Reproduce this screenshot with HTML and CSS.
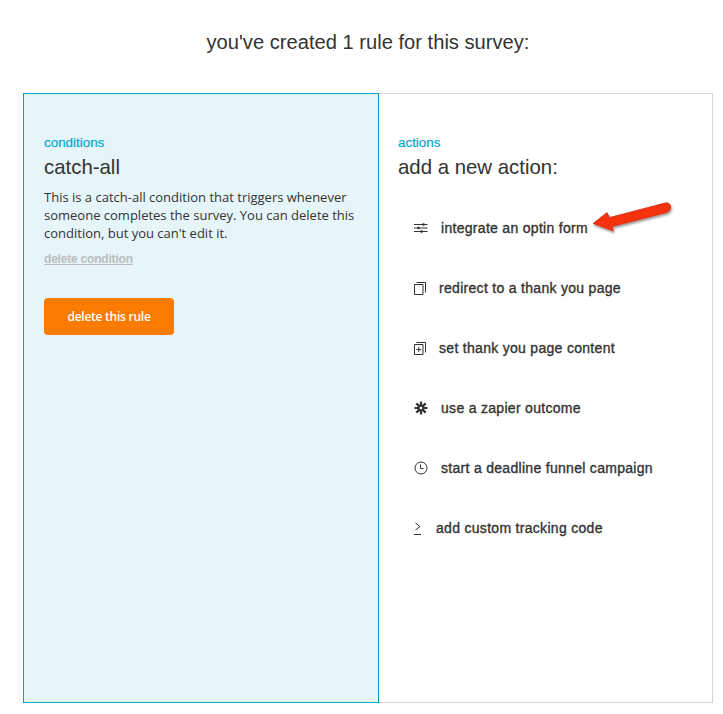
FILE: index.html
```html
<!DOCTYPE html>
<html lang="en">
<head>
    <meta charset="UTF-8">
    <meta name="viewport" content="width=device-width, initial-scale=1.0">
    <title>Survey rules</title>
    <link rel="stylesheet" href="styles.css">
</head>
<body>
    <div class="page">
        <h1 class="page-title">you've created 1 rule for this survey:</h1>
        <div class="rule">
            <div class="conditions">
                <div class="label">conditions</div>
                <h2 class="heading">catch-all</h2>
                <p class="description">This is a catch-all condition that triggers whenever someone completes the survey. You can delete this condition, but you can't edit it.</p>
                <a class="delete-link" href="#">delete condition</a>
                <a class="delete-button" href="#">delete this rule</a>
            </div>
            <div class="actions">
                <div class="label">actions</div>
                <h2 class="heading">add a new action:</h2>
                <ul class="action-list">
                    <li class="action">
                        <svg class="icon" width="14" height="14" viewBox="0 0 14 14">
                            <path d="M0 3.5H13.5M0 7H13.5M0 10.5H13.5" stroke="#333" fill="none"/>
                            <path d="M8.5 2.2h2v2.6h-2zM3.5 5.7h2v2.6h-2zM6.5 9.2h2v2.6h-2z" fill="#333"/>
                        </svg>
                        <span>integrate an optin form</span>
                        <svg class="arrow" width="84" height="36" viewBox="0 0 84 36">
                            <defs>
                                <filter id="arrow-shadow" x="-10%" y="-20%" width="125%" height="160%">
                                    <feDropShadow dx="1" dy="2" stdDeviation="1.2" flood-color="#000" flood-opacity="0.4"/>
                                </filter>
                            </defs>
                            <path d="M1 22.5 L15 11.5 L17.5 16.5 L73 2 Q78 1.2 78.6 5.5 Q78.6 10 74.5 11.5 L20 25.5 L21.5 30 Z" fill="#f4300c" stroke="#d3260a" stroke-width="0.7" stroke-linejoin="round" filter="url(#arrow-shadow)"/>
                        </svg>
                    </li>
                    <li class="action">
                        <svg class="icon" width="12" height="14" viewBox="0 0 12 14">
                            <path d="M0.5 3.5h8.5v10h-8.5z" stroke="#333" fill="none"/>
                            <path d="M2.5 1.5h9v10" stroke="#333" fill="none"/>
                        </svg>
                        <span>redirect to a thank you page</span>
                    </li>
                    <li class="action">
                        <svg class="icon" width="12" height="14" viewBox="0 0 12 14">
                            <path d="M0.5 3.5h8.5v10h-8.5z" stroke="#333" fill="none"/>
                            <path d="M2.5 1.5h9v10M4.75 6v5M2.25 8.5h5" stroke="#333" fill="none"/>
                        </svg>
                        <span>set thank you page content</span>
                    </li>
                    <li class="action">
                        <svg class="icon" width="14" height="14" viewBox="0 0 14 14">
                            <path d="M7 0.5V13.5M0.5 7H13.5M2.4 2.4L11.6 11.6M11.6 2.4L2.4 11.6" stroke="#333" stroke-width="2.2" fill="none"/>
                            <circle cx="7" cy="7" r="3.6" fill="#333"/>
                            <circle cx="7" cy="7" r="1.3" fill="#fff"/>
                        </svg>
                        <span>use a zapier outcome</span>
                    </li>
                    <li class="action">
                        <svg class="icon" width="14" height="14" viewBox="0 0 14 14">
                            <circle cx="7" cy="7" r="6" stroke="#333" fill="none"/>
                            <path d="M6.5 3.5V7.5H9.5" stroke="#333" fill="none"/>
                        </svg>
                        <span>start a deadline funnel campaign</span>
                    </li>
                    <li class="action">
                        <svg class="icon" width="9" height="13" viewBox="0 0 9 13">
                            <path d="M1.5 1L6 4.5L1.5 8M0 12.5H7" stroke="#333" fill="none"/>
                        </svg>
                        <span>add custom tracking code</span>
                    </li>
                </ul>
            </div>
        </div>
    </div>
</body>
</html>
```

FILE: styles.css
```css
body {
    margin: 0;
    background-color: #ffffff;
    color: #333333;
    font-family: 'Liberation Sans', Arial, sans-serif;
}
.page {
    padding: 0 10px 11px 23px;
}
.page-title {
    margin: 0;
    padding-top: 31px;
    height: 62px;
    box-sizing: border-box;
    line-height: 23px;
    font-size: 20.15px;
    font-weight: normal;
    text-align: center;
}
.rule {
    display: flex;
    margin-top: 31px;
    height: 610px;
}
.conditions {
    width: 356px;
    box-sizing: border-box;
    padding: 41px 20px 0 20px;
    background-color: #e6f5fa;
    border: 1px solid #00a5c8;
}
.actions {
    flex: 1;
    box-sizing: border-box;
    padding: 41px 19px 0 19px;
    border: 1px solid #d5d5d5;
    border-left: none;
}
.label {
    font-size: 13.4px;
    line-height: 15px;
    color: #00a8cc;
    -webkit-text-stroke: 0.2px #00a8cc;
}
.heading {
    margin: 5px 0 0;
    font-size: 20.4px;
    line-height: 24px;
    font-weight: normal;
}
.description {
    margin: 9px 0 0;
    font-family: 'Open Sans', sans-serif;
    font-size: 13px;
    line-height: 18px;
}
.delete-link {
    display: block;
    margin-top: 9px;
    font-size: 12px;
    letter-spacing: -0.2px;
    line-height: 16px;
    font-weight: bold;
    color: #bdbdbd;
}
.delete-button {
    display: block;
    width: 130px;
    height: 37px;
    margin-top: 31px;
    border-radius: 4px;
    background-color: #fb7a00;
    color: #ffffff;
    font-family: 'Open Sans', sans-serif;
    font-size: 12px;
    letter-spacing: -0.25px;
    font-weight: 600;
    line-height: 37px;
    text-align: center;
    text-decoration: none;
}
.action-list {
    list-style: none;
    margin: 19px 0 0;
    padding: 0 0 0 16px;
}
.action {
    position: relative;
    display: flex;
    align-items: center;
    gap: 13px;
    height: 60px;
    font-size: 14px;
    letter-spacing: 0.3px;
    color: #333333;
    -webkit-text-stroke: 0.35px #333333;
}
.action .icon {
    flex-shrink: 0;
}
.arrow {
    position: absolute;
    left: 178px;
    top: 3px;
}
```
